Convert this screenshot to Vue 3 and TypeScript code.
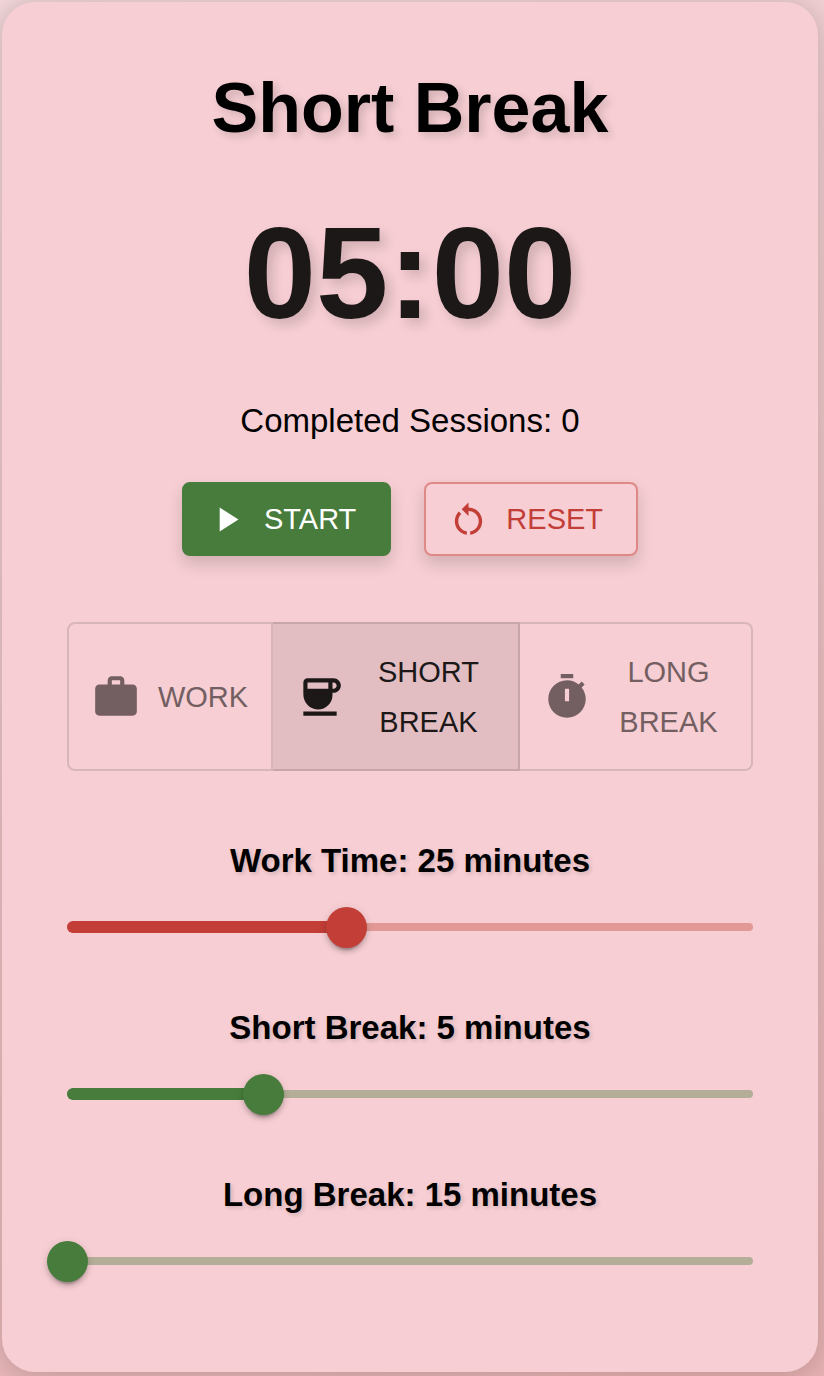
<script setup lang="ts">
import { computed, reactive, ref } from 'vue'

type Mode = 'work' | 'short' | 'long'

interface Setting {
  mode: Mode
  label: string
  value: number
  min: number
  max: number
  tone: 'red' | 'green'
}

const settings = reactive<Setting[]>([
  { mode: 'work', label: 'Work Time', value: 25, min: 1, max: 60, tone: 'red' },
  { mode: 'short', label: 'Short Break', value: 5, min: 1, max: 15, tone: 'green' },
  { mode: 'long', label: 'Long Break', value: 15, min: 15, max: 30, tone: 'green' },
])

const modes: { id: Mode; label: string; title: string; icon: string }[] = [
  {
    id: 'work',
    label: 'Work',
    title: 'Work Time',
    icon: 'M20 6h-4V4c0-1.11-.89-2-2-2h-4c-1.11 0-2 .89-2 2v2H4c-1.11 0-1.99.89-1.99 2L2 19c0 1.11.89 2 2 2h16c1.11 0 2-.89 2-2V8c0-1.11-.89-2-2-2zm-6 0h-4V4h4v2z',
  },
  {
    id: 'short',
    label: 'Short Break',
    title: 'Short Break',
    icon: 'M18.5 3H6c-1.1 0-2 .9-2 2v5.71c0 3.83 2.95 7.18 6.78 7.29 3.96.12 7.22-3.06 7.22-7v-1h.5c1.93 0 3.5-1.57 3.5-3.5S20.43 3 18.5 3zM16 5v3H6V5h10zm2.5 3H18V5h.5c.83 0 1.5.67 1.5 1.5S19.33 8 18.5 8zM4 19h16v2H4v-2z',
  },
  {
    id: 'long',
    label: 'Long Break',
    title: 'Long Break',
    icon: 'M9 1h6v2H9zm10.03 6.39 1.42-1.42c-.43-.51-.9-.99-1.41-1.41l-1.42 1.42C16.07 4.74 14.12 4 12 4c-4.97 0-9 4.03-9 9s4.02 9 9 9 9-4.03 9-9c0-2.12-.74-4.07-1.97-5.61zM13 14h-2V8h2v6z',
  },
]

const mode = ref<Mode>('short')
const sessions = ref(0)
const elapsed = ref(0)
let timer: number | undefined

const title = computed(() => modes.find((m) => m.id === mode.value)!.title)
const clock = computed(() => {
  const total = settings.find((s) => s.mode === mode.value)!.value * 60
  const left = Math.max(0, total - elapsed.value)
  const pad = (n: number) => String(n).padStart(2, '0')
  return `${pad(Math.floor(left / 60))}:${pad(left % 60)}`
})

function percent(s: Setting): string {
  return `${((s.value - s.min) / (s.max - s.min)) * 100}%`
}

function stop() {
  window.clearInterval(timer)
  timer = undefined
}

function start() {
  if (timer !== undefined) return
  timer = window.setInterval(() => {
    elapsed.value++
    if (clock.value === '00:00') {
      if (mode.value === 'work') sessions.value++
      stop()
    }
  }, 1000)
}

function reset() {
  stop()
  elapsed.value = 0
}

function choose(next: Mode) {
  mode.value = next
  reset()
}
</script>

<template>
  <div class="page">
    <main class="card">
      <h1 class="title">{{ title }}</h1>
      <div class="clock" role="timer">{{ clock }}</div>
      <p class="sessions">Completed Sessions: {{ sessions }}</p>

      <div class="actions">
        <button type="button" class="btn btn-start" @click="start">
          <svg viewBox="0 0 24 24" aria-hidden="true"><path d="M8 5v14l11-7z" /></svg>
          <span>Start</span>
        </button>
        <button type="button" class="btn btn-reset" @click="reset">
          <svg viewBox="0 0 24 24" aria-hidden="true">
            <path d="M12 5V2L8 6l4 4V7c3.31 0 6 2.69 6 6 0 2.97-2.17 5.43-5 5.91v2.02c3.95-.49 7-3.85 7-7.93 0-4.42-3.58-8-8-8zm-6 8c0-1.65.67-3.15 1.76-4.24L6.34 7.34C4.9 8.79 4 10.79 4 13c0 4.08 3.05 7.44 7 7.93v-2.02c-2.83-.48-5-2.94-5-5.91z" />
          </svg>
          <span>Reset</span>
        </button>
      </div>

      <div class="modes" role="group" aria-label="Timer mode">
        <button
          v-for="m in modes"
          :key="m.id"
          type="button"
          class="mode"
          :class="{ selected: m.id === mode }"
          :aria-pressed="m.id === mode"
          @click="choose(m.id)"
        >
          <svg viewBox="0 0 24 24" aria-hidden="true"><path :d="m.icon" /></svg>
          <span>{{ m.label }}</span>
        </button>
      </div>

      <div class="settings">
        <div v-for="s in settings" :key="s.mode" class="setting" :class="s.tone">
          <label :for="`range-${s.mode}`">{{ s.label }}: {{ s.value }} minutes</label>
          <div class="slider">
            <div class="rail"></div>
            <div class="fill" :style="{ width: percent(s) }"></div>
            <input
              :id="`range-${s.mode}`"
              v-model.number="s.value"
              type="range"
              :min="s.min"
              :max="s.max"
            />
          </div>
        </div>
      </div>
    </main>
  </div>
</template>

<style>
body {
  margin: 0;
}
</style>

<style scoped>
.page {
  box-sizing: border-box;
  min-height: 100vh;
  padding: 2px 6px 4px 2px;
  background: linear-gradient(160deg, #f2d6d9, #e8b2b3);
  font-family: "Liberation Sans", Arial, Helvetica, sans-serif;
  color: #000;
}

.card {
  padding: 65px 65px 80px;
  border-radius: 33px;
  background: #f6ced3;
  box-shadow:
    0 0 24px rgba(0, 0, 0, 0.1),
    0 8px 32px rgba(0, 0, 0, 0.1);
  text-align: center;
}

.title {
  margin: 0;
  font-size: 70px;
  line-height: 82px;
  font-weight: 700;
  text-shadow: 4px 4px 8px rgba(0, 0, 0, 0.15);
}

.clock {
  margin-top: 46px;
  font-size: 130px;
  line-height: 156px;
  font-weight: 700;
  color: #1c1818;
  text-shadow: 6px 6px 12px rgba(0, 0, 0, 0.15);
}

.sessions {
  margin: 45px 0 0;
  font-size: 33px;
  line-height: 50px;
}

.actions {
  display: flex;
  justify-content: center;
  gap: 33px;
  margin-top: 36px;
}

.btn {
  display: flex;
  align-items: center;
  gap: 17px;
  box-sizing: border-box;
  height: 74px;
  padding: 0 33px 0 22px;
  border: 2px solid transparent;
  border-radius: 8px;
  font: inherit;
  font-size: 29px;
  line-height: 50px;
  text-transform: uppercase;
  cursor: pointer;
  box-shadow: 0 8px 16px rgba(0, 0, 0, 0.15);
}

.btn svg {
  width: 41px;
  height: 41px;
  fill: currentColor;
}

.btn-start {
  border-color: #477c3c;
  background: #477c3c;
  color: #fff;
}

.btn-reset {
  border-color: #df8986;
  background: #f6ced3;
  color: #c23e37;
}

.modes {
  display: grid;
  grid-template-columns: 206fr 247fr 233fr;
  margin-top: 66px;
}

.mode {
  display: flex;
  align-items: center;
  gap: 16px;
  box-sizing: border-box;
  min-width: 0;
  padding: 23px 22px 22px;
  border: 2px solid rgba(0, 0, 0, 0.12);
  border-left-width: 0;
  background: transparent;
  color: #735f61;
  font: inherit;
  font-size: 29px;
  line-height: 50px;
  text-transform: uppercase;
  cursor: pointer;
}

.mode:first-child {
  border-left-width: 2px;
  border-radius: 8px 0 0 8px;
}

.mode:last-child {
  border-radius: 0 8px 8px 0;
}

.mode.selected {
  background: #e2bec2;
  color: #1c1818;
}

.mode svg {
  flex: none;
  width: 50px;
  height: 50px;
  fill: currentColor;
}

.mode span {
  flex: 1;
}

.settings {
  display: flex;
  flex-direction: column;
  gap: 45px;
  margin-top: 65px;
}

.setting {
  display: flex;
  flex-direction: column;
  gap: 10px;
}

.setting label {
  font-size: 33px;
  line-height: 50px;
  font-weight: 700;
  text-shadow: 2px 2px 4px rgba(0, 0, 0, 0.15);
}

.red {
  --main: #c23e37;
  --rail: #e29996;
}

.green {
  --main: #477c3c;
  --rail: #b4ae98;
}

.slider {
  display: grid;
  align-items: center;
  height: 62px;
}

.slider > * {
  grid-area: 1 / 1;
}

.rail {
  height: 8px;
  border-radius: 4px;
  background: var(--rail);
}

.fill {
  height: 12px;
  border-radius: 6px;
  background: var(--main);
}

.slider input {
  appearance: none;
  height: 62px;
  margin: 0 -20px;
  background: transparent;
  cursor: pointer;
}

.slider input::-webkit-slider-thumb {
  appearance: none;
  width: 41px;
  height: 41px;
  border: 0;
  border-radius: 50%;
  background: var(--main);
  box-shadow:
    0 6px 2px -4px rgba(0, 0, 0, 0.2),
    0 4px 4px rgba(0, 0, 0, 0.14),
    0 2px 10px rgba(0, 0, 0, 0.12);
}

.slider input::-moz-range-thumb {
  width: 41px;
  height: 41px;
  border: 0;
  border-radius: 50%;
  background: var(--main);
}
</style>
